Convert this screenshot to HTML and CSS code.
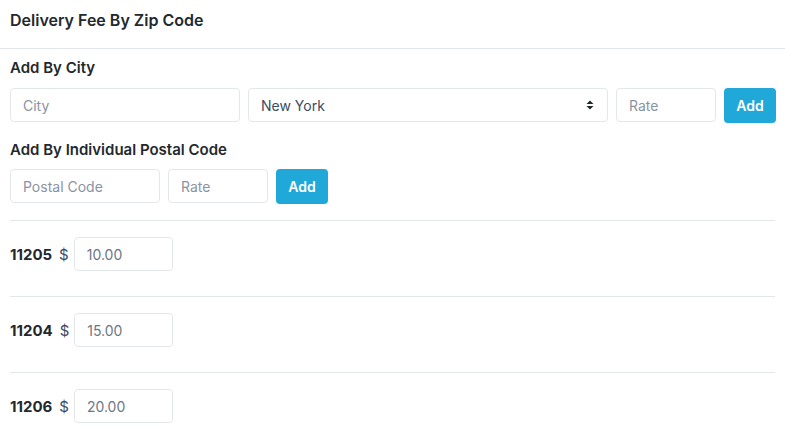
FILE: index.html
```html
<!DOCTYPE html>
<html lang="en">
<head>
    <meta charset="UTF-8">
    <meta name="viewport" content="width=device-width, initial-scale=1.0">
    <title>Delivery Fee By Zip Code</title>
    <link rel="stylesheet" href="styles.css">
</head>
<body>
    <div class="kartya">
        <header class="kartya-fejlec">Delivery Fee By Zip Code</header>

        <div class="kartya-tartalom">
            <h6 class="cim">Add By City</h6>
            <form class="sor varos-sor">
                <input type="text" class="mezo" placeholder="City">
                <div class="valaszto">
                    <select class="mezo">
                        <option>New York</option>
                        <option>Brooklyn</option>
                        <option>Queens</option>
                    </select>
                    <svg class="nyilak" width="8" height="12" viewBox="0 0 8 12">
                        <path d="M4 1.5 L7.5 5 L0.5 5 Z M4 10.5 L7.5 7 L0.5 7 Z" fill="#23282c"/>
                    </svg>
                </div>
                <input type="text" class="mezo kicsi" placeholder="Rate">
                <button type="submit" class="gomb">Add</button>
            </form>

            <h6 class="cim cim-masodik">Add By Individual Postal Code</h6>
            <form class="sor irszam-sor">
                <input type="text" class="mezo kozepes" placeholder="Postal Code">
                <input type="text" class="mezo kicsi" placeholder="Rate">
                <button type="submit" class="gomb">Add</button>
            </form>

            <div class="lista" id="lista"></div>
        </div>
    </div>

    <script>
        const dijak = [
            { irszam: "11205", ar: "10.00" },
            { irszam: "11204", ar: "15.00" },
            { irszam: "11206", ar: "20.00" }
        ];
        const lista = document.getElementById("lista");

        dijak.forEach(d => {
            const sor = document.createElement("div");
            sor.className = "dij-sor";
            sor.innerHTML = `<strong class="irszam">${d.irszam}</strong>
                <span class="dollar">$</span>
                <input type="text" class="mezo ar" value="${d.ar}">`;
            lista.appendChild(sor);
        });
    </script>
</body>
</html>
```

FILE: styles.css
```css
* {
    box-sizing: border-box;
    margin: 0;
    padding: 0;
}

body {
    font-family: Inter, "Noto Sans", sans-serif;
    font-size: 14px;
    color: #23282c;
    background: #fff;
}

.kartya-fejlec {
    font-size: 16px;
    font-weight: 600;
    line-height: 24px;
    padding: 8px 10px 16px;
    border-bottom: 1px solid #e4e7ea;
}

.kartya-tartalom {
    padding: 0 10px;
}

.cim {
    font-size: 15px;
    font-weight: 600;
    line-height: 20px;
    margin-top: 9px;
    margin-bottom: 10px;
}

.cim-masodik {
    margin-top: 17px;
    margin-bottom: 9px;
}

.sor {
    display: flex;
    gap: 8px;
}

.sor > * {
    flex-shrink: 0;
}

.mezo {
    height: 34px;
    padding: 0 12px;
    border: 1px solid #e4e7ea;
    border-radius: 4px;
    font-family: inherit;
    font-size: 14px;
    color: #5c6873;
    background: #fff;
    outline: none;
}

.mezo::placeholder {
    color: #8a93a2;
}

.varos-sor > .mezo:first-child {
    width: 230px;
}

.valaszto {
    position: relative;
    width: 360px;
}

.valaszto select {
    width: 100%;
    appearance: none;
    -webkit-appearance: none;
    color: #3c4b64;
}

.nyilak {
    position: absolute;
    right: 14px;
    top: 11px;
    pointer-events: none;
}

.kicsi {
    width: 100px;
}

.kozepes {
    width: 150px;
}

.gomb {
    width: 52px;
    height: 35px;
    border: none;
    border-radius: 4px;
    background: #20a8d8;
    color: #fff;
    font-family: inherit;
    font-size: 14px;
    font-weight: 600;
}

.irszam-sor {
    padding-bottom: 16px;
    border-bottom: 1px solid #e4e7ea;
}

.dij-sor {
    display: flex;
    align-items: center;
    padding: 16px 0 25px;
    border-bottom: 1px solid #e4e7ea;
}

.irszam {
    font-weight: 700;
    font-size: 15px;
}

.dollar {
    margin-left: 7px;
    margin-right: 5px;
    font-size: 15px;
    color: #3c4b64;
}

.ar {
    width: 99px;
    color: #6b7785;
}
```
